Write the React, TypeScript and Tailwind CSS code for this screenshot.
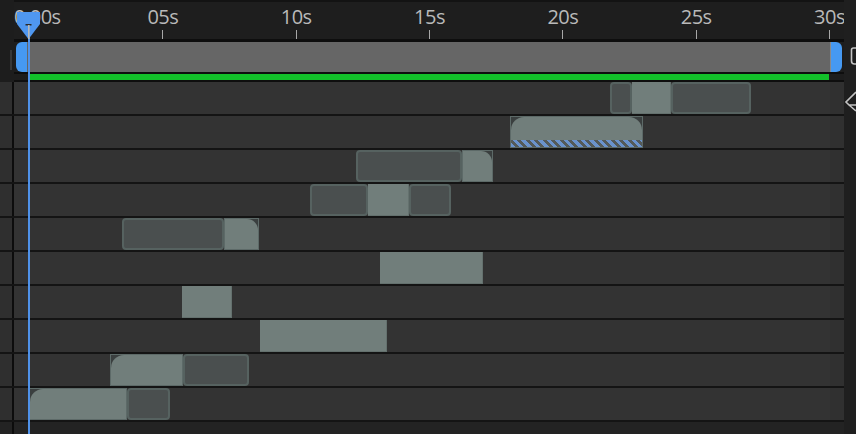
import React from "react";

type Seg = { k: "d" | "l"; a: number; b: number; r?: "l" | "r" | "both"; hatch?: boolean };

const X0 = 14;
const rows: Seg[][] = [
  [{ k: "d", a: 610, b: 632 }, { k: "l", a: 632, b: 671 }, { k: "d", a: 671, b: 751 }],
  [{ k: "l", a: 510, b: 643, r: "both", hatch: true }],
  [{ k: "d", a: 356, b: 462 }, { k: "l", a: 462, b: 493, r: "r" }],
  [{ k: "d", a: 310, b: 368 }, { k: "l", a: 368, b: 409 }, { k: "d", a: 409, b: 451 }],
  [{ k: "d", a: 122, b: 224 }, { k: "l", a: 224, b: 259, r: "r" }],
  [{ k: "l", a: 380, b: 483 }],
  [{ k: "l", a: 182, b: 232 }],
  [{ k: "l", a: 260, b: 387 }],
  [{ k: "l", a: 110, b: 183, r: "l" }, { k: "d", a: 183, b: 249 }],
  [{ k: "l", a: 29, b: 127, r: "l" }, { k: "d", a: 127, b: 170 }],
];

const labels = ["05s", "10s", "15s", "20s", "25s", "30s"];

function Segment({ s }: { s: Seg }) {
  const style = { left: s.a - X0, width: s.b - s.a };
  if (s.k === "d") {
    return (
      <div
        className="absolute top-0 h-[32px] rounded-[4px] border-2 border-[#566260] bg-[#4a4f4f]"
        style={style}
      />
    );
  }
  if (s.hatch) {
    return (
      <div
        className="absolute top-0 h-[32px] border border-[#5d6a68] bg-[#3a3f3f] flex flex-col"
        style={style}
      >
        <div className="flex-1 bg-[#717e7b] rounded-t-[13px]" />
        <div className="h-[7px] bg-[repeating-linear-gradient(45deg,#6a92cc_0px,#6a92cc_3px,#545a5a_3px,#545a5a_6px)]" />
      </div>
    );
  }
  if (s.r) {
    return (
      <div className="absolute top-0 h-[32px] bg-[#3a3f3f] border border-[#5d6a68]" style={style}>
        <div
          className={
            "h-full bg-[#717e7b] " +
            (s.r === "l" ? "rounded-tl-[13px]" : s.r === "r" ? "rounded-tr-[11px]" : "rounded-t-[13px]")
          }
        />
      </div>
    );
  }
  return <div className="absolute top-0 h-[32px] bg-[#717e7b] border-b border-r border-[#64716e]" style={style} />;
}

export default function App() {
  return (
    <div className="relative w-[856px] h-[434px] overflow-hidden bg-[#1f1f1f] flex font-['Open_Sans',sans-serif]">
      {/* left column */}
      <div className="w-[14px] flex flex-col shrink-0">
        <div className="h-[82px] bg-[#1d1d1d] relative shrink-0">
          <div className="absolute left-[10px] top-[50px] w-[2px] h-[20px] bg-[#383838]" />
        </div>
        {rows.map((_, i) => (
          <div key={i} className="flex flex-col shrink-0">
            <div className="h-[32px] flex">
              <div className="w-[12px] bg-[#2f2f2f]" />
              <div className="w-[2px] bg-[#0c0c0c]" />
            </div>
            <div className="h-[2px] bg-[#141414]" />
          </div>
        ))}
        <div className="flex-1 flex">
          <div className="w-[12px] bg-[#232323]" />
          <div className="w-[2px] bg-[#0c0c0c]" />
        </div>
      </div>

      {/* main timeline */}
      <div className="w-[830px] flex flex-col shrink-0">
        {/* ruler */}
        <div className="h-[39px] relative bg-[#1e1e1e] overflow-hidden shrink-0">
          <div className="absolute left-0 top-0 right-0 h-[2px] bg-[#131313]" />
          <span className="absolute left-[0px] top-[7px] text-[20px] leading-none text-[#b9b9b9] tracking-[-0.5px]">
            0:00s
          </span>
          {labels.map((l, i) => {
            const x = 29 + (i + 1) * (800 / 6) - X0;
            return (
              <React.Fragment key={l}>
                <span
                  className="absolute top-[7px] text-[20px] leading-none text-[#b9b9b9] tracking-[-0.5px] -translate-x-1/2"
                  style={{ left: x + 0.5 }}
                >
                  {l}
                </span>
                <div className="absolute top-[30px] w-[1px] h-[9px] bg-[#a8a8a8]" style={{ left: Math.round(x) }} />
              </React.Fragment>
            );
          })}
        </div>
        <div className="h-[3px] bg-[#0e0e0e] shrink-0" />
        {/* work area */}
        <div className="h-[30px] flex shrink-0">
          <div className="w-[2px] bg-[#1d1d1d]" />
          <div className="w-[11px] bg-[#4699f2] rounded-l-[6px]" />
          <div className="w-[803px] bg-[#666666]" />
          <div className="w-[1px] bg-[#8a8a8a]" />
          <div className="w-[11px] bg-[#4699f2] rounded-r-[6px]" />
          <div className="w-[2px] bg-[#1d1d1d]" />
        </div>
        <div className="h-[2px] bg-[#0e0e0e] shrink-0" />
        <div className="h-[6px] flex shrink-0">
          <div className="w-[15px] bg-[#1d1d1d]" />
          <div className="w-[800px] bg-[#13c12a]" />
          <div className="w-[15px] bg-[#1d1d1d]" />
        </div>
        <div className="h-[2px] bg-[#0e0e0e] shrink-0" />
        {/* rows */}
        {rows.map((segs, i) => (
          <div key={i} className="flex flex-col shrink-0">
            <div className="h-[32px] relative flex">
              <div className="w-[816px] bg-[#333333]" />
              <div className="w-[14px] bg-[#303030]" />
              {segs.map((s, j) => (
                <Segment key={j} s={s} />
              ))}
            </div>
            <div className="h-[2px] bg-[#141414]" />
          </div>
        ))}
        <div className="flex-1 bg-[#232323]" />
      </div>

      {/* right column */}
      <div className="w-[12px] relative bg-[#1f1f1f] shrink-0">
        <svg className="absolute left-0 top-0" width="12" height="120" viewBox="0 0 12 120">
          <path d="M12 48 L9.5 48 Q7.5 48 7.5 50 L7.5 61 Q7.5 64 10.5 64 L12 64" fill="none" stroke="#c4c4c4" strokeWidth="1.6" />
          <path d="M12 92 L2 102 L5 105 L12 105 M5 105 L12 111" fill="none" stroke="#c4c4c4" strokeWidth="1.6" />
        </svg>
      </div>

      {/* playhead */}
      <div className="absolute left-[28px] top-[24px] bottom-0 w-[2px] bg-[#4f92ea]" />
      <svg className="absolute left-[17px] top-[12px]" width="23" height="27" viewBox="0 0 23 27">
        <path d="M0 0 H23 V12 L12 26.5 L11 26.5 L0 12 Z" fill="#4f97f0" />
        <rect x="8.5" y="12" width="6" height="1.5" fill="#2a2a2a" />
        <rect x="11" y="13" width="1.6" height="14" fill="#b8b8b8" />
      </svg>
    </div>
  );
}
